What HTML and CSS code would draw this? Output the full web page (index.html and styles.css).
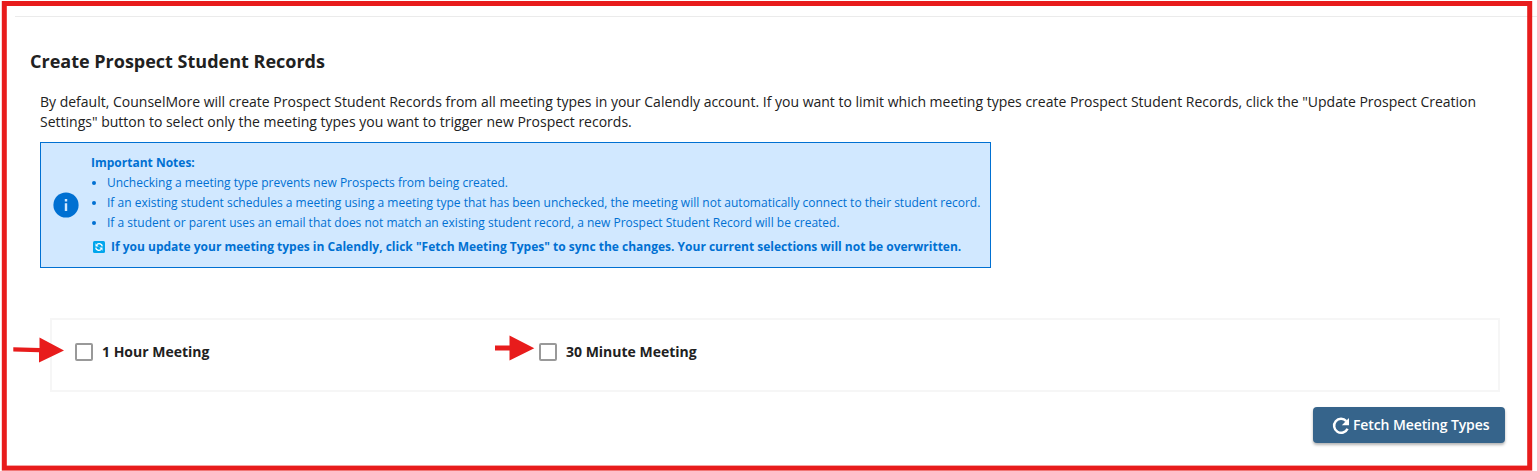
FILE: index.html
```html
<!DOCTYPE html>
<html lang="en">
<head>
<meta charset="utf-8">
<title>Create Prospect Student Records</title>
<link rel="stylesheet" href="styles.css">
</head>
<body>
<main class="page">
  <hr class="divider">
  <h1 class="title">Create Prospect Student Records</h1>
  <p class="intro">By default, CounselMore will create Prospect Student Records from all meeting types in your Calendly account. If you want to limit which meeting types create Prospect Student Records, click the "Update Prospect Creation Settings" button to select only the meeting types you want to trigger new Prospect records.</p>
  <section class="notice">
    <svg class="notice-icon" width="26" height="26" viewBox="0 0 26 26"><circle cx="13" cy="13" r="12.6" fill="#0070d2"/><path d="M11.8 7h2.4v2.5h-2.4zM11.8 11.2h2.4V19h-2.4z" fill="#d1e8ff"/></svg>
    <div class="notice-body">
      <strong class="notice-heading">Important Notes:</strong>
      <ul class="notice-list">
        <li>Unchecking a meeting type prevents new Prospects from being created.</li>
        <li>If an existing student schedules a meeting using a meeting type that has been unchecked, the meeting will not automatically connect to their student record.</li>
        <li>If a student or parent uses an email that does not match an existing student record, a new Prospect Student Record will be created.</li>
      </ul>
      <div class="notice-sync">
        <svg width="12" height="12" viewBox="0 0 12 12"><rect width="12" height="12" rx="1.5" fill="#00a6ed"/><path d="M9.3 5.3A3.2 3.2 0 0 0 4 3.5M2.7 6.7A3.2 3.2 0 0 0 8 8.5" fill="none" stroke="#fff" stroke-width="1.4"/><path d="M2.5 2.2v3.2h3.2zM9.5 9.8V6.6H6.3z" fill="#fff"/></svg>
        <strong>If you update your meeting types in Calendly, click "Fetch Meeting Types" to sync the changes. Your current selections will not be overwritten.</strong>
      </div>
    </div>
  </section>
  <section class="meetings">
    <label class="meeting"><span class="box"></span><span class="meeting-name">1 Hour Meeting</span></label>
    <label class="meeting"><span class="box"></span><span class="meeting-name">30 Minute Meeting</span></label>
  </section>
  <div class="actions">
    <button class="fetch" type="button">
      <svg class="fetch-icon" width="18" height="18" viewBox="0 0 18 18"><path d="M14.3 4.1A7 7 0 1 0 15.5 11.7" fill="none" stroke="#fff" stroke-width="2.5"/><path d="M17 1v7.3H9.8z" fill="#fff"/></svg>
      <span>Fetch Meeting Types</span>
    </button>
  </div>
  <svg class="annotations" width="1537" height="471" viewBox="0 0 1537 471">
    <rect x="4.3" y="3.5" width="1525.4" height="464.6" fill="none" stroke="#e81c1c" stroke-width="5"/>
    <path d="M13.3 347.2L39.5 348V337.6L64 350.4L39 362.5V352.3L13.3 351.5z" fill="#e81c1c"/>
    <path d="M495 345.6H509.5V335.6L534.3 348.2L509.5 360.6V350.4H495z" fill="#e81c1c"/>
  </svg>
</main>
</body>
</html>
```
FILE: styles.css
```css
* { box-sizing: border-box; }
body { margin: 0; background: #fff; color: #212121; font-family: "Open Sans", sans-serif; }
.page { position: relative; width: 1537px; height: 471px; padding-top: 16px; overflow: hidden; }
.divider { height: 1px; margin: 0 0 0 15px; border: 0; background: #ebebeb; }
.title { margin: 32px 0 0 30px; font-size: 18px; line-height: 25px; font-weight: 700; }
.intro { width: 1450px; margin: 18px 0 0 40px; font-size: 14px; line-height: 20px; }
.notice { display: flex; align-items: center; width: 951px; height: 126px; margin: 10px 0 0 40px; padding-left: 12px; border: 1px solid #0070d2; background: #d1e8ff; color: #0070d2; font-size: 12px; line-height: 20px; white-space: nowrap; }
.notice-icon { flex: none; margin-right: 12px; }
.notice-body { display: flex; flex-direction: column; }
.notice-list { margin: 0; padding-left: 16px; }
.notice-sync { display: flex; align-items: center; gap: 6px; margin-top: 4px; padding-left: 2px; }
.meetings { display: grid; grid-template-columns: 464px 1fr; align-items: center; width: 1450px; height: 74px; margin: 50px 0 0 50px; padding: 0 23px 6px; border: 2px solid #f6f6f6; font-size: 14px; line-height: 18px; font-weight: 700; }
.meeting { display: flex; align-items: center; gap: 9px; }
.meeting-name { padding-bottom: 1px; }
.box { width: 18px; height: 18px; border: 2px solid #999; border-radius: 2px; }
.actions { display: flex; justify-content: flex-end; padding: 15px 32px 0 0; }
.fetch { display: flex; align-items: center; justify-content: flex-start; gap: 3px; width: 192px; height: 36px; padding: 0 0 0 19px; border: 0; border-radius: 4px; background: #36648b; color: #fff; font: 600 14px/20px "Open Sans", sans-serif; letter-spacing: -.1px; box-shadow: 0 2px 3px rgba(0,0,0,.3); white-space: nowrap; }
.fetch-icon { flex: none; margin-top: 2px; }
.annotations { position: absolute; left: 0; top: 0; pointer-events: none; }
```
